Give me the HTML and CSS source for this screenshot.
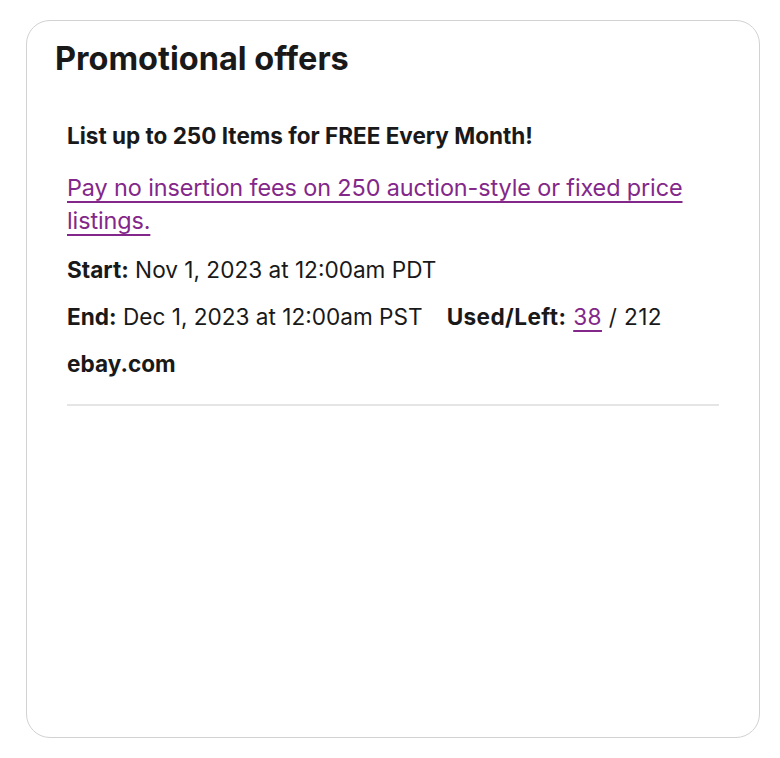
FILE: index.html
```html
<!DOCTYPE html>
<html lang="en">
<head>
<meta charset="utf-8">
<title>Promotional offers</title>
<link rel="stylesheet" href="styles.css">
</head>
<body>
<section class="card">
  <h2 class="card-title">Promotional offers</h2>
  <div class="offer">
    <h3 class="offer-title">List up to 250 Items for FREE Every Month!</h3>
    <p class="offer-desc"><a href="#" class="link">Pay no insertion fees on 250 auction-style or fixed price listings.</a></p>
    <p class="offer-row first"><span class="label">Start:</span> Nov 1, 2023 at 12:00am PDT</p>
    <p class="offer-row"><span class="label">End:</span> Dec 1, 2023 at 12:00am PST<span class="used"><span class="label">Used/Left:</span> <a href="#" class="link">38</a> / 212</span></p>
    <p class="offer-row offer-site">ebay.com</p>
  </div>
</section>
</body>
</html>
```
FILE: styles.css
```css
* { box-sizing: border-box; }
html, body { margin: 0; padding: 0; background: #ffffff; }
body {
  font-family: Inter, "Liberation Sans", Arial, sans-serif;
  color: #191919;
  padding: 20px 20px 20px 26px;
}
.card {
  width: 734px;
  height: 718px;
  border: 1.5px solid #d2d2d2;
  border-radius: 24px;
  padding: 18px 40px 0 28px;
}
.card-title {
  margin: 0;
  font-size: 32.5px;
  font-weight: 700;
  line-height: 40px;
}
.offer {
  margin: 0 0 0 12px;
  padding: 42px 0 24px;
  border-bottom: 2px solid #e5e5e5;
}
.offer-title {
  margin: 0;
  font-size: 22.5px;
  font-weight: 700;
  line-height: 30px;
}
.offer-desc {
  margin: 20px 0 0;
  font-size: 23.4px;
  line-height: 33px;
  letter-spacing: -0.1px;
}
.link {
  color: #83278a;
  text-decoration: underline;
  text-underline-offset: 5px;
  text-decoration-thickness: 1.5px;
}
.offer-row {
  margin: 14px 0 0;
  font-size: 22.6px;
  line-height: 33px;
}
.offer-row.first { margin-top: 16px; }
.label { font-weight: 700; }
.used { margin-left: 24px; letter-spacing: 0.4px; }
.offer-site { font-weight: 700; }
```
